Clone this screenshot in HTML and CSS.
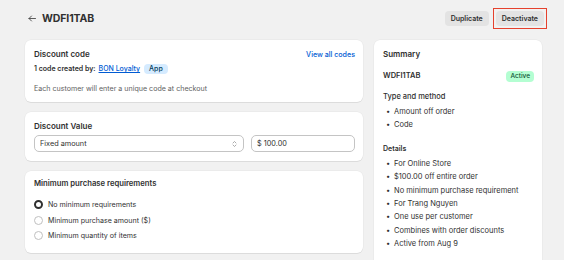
FILE: index.html
```html
<!DOCTYPE html>
<html lang="en">

<head>
  <meta charset="UTF-8">
  <meta name="viewport" content="width=device-width, initial-scale=1.0">
  <title>WDFI1TAB</title>
  <link rel="stylesheet" href="styles.css">
</head>

<body>
  <div class="page">
    <header class="header">
      <div class="title-wrap">
        <svg class="back" width="8" height="7" viewBox="0 0 8 7">
          <path d="M7.5 3.5H1M3.5 1L1 3.5L3.5 6" fill="none" stroke="#4a4a4a" stroke-width="0.9" stroke-linecap="round" stroke-linejoin="round"/>
        </svg>
        <h1 class="title">WDFI1TAB</h1>
      </div>
      <div class="actions">
        <button class="btn">Duplicate</button>
        <span class="highlight"><button class="btn">Deactivate</button></span>
      </div>
    </header>

    <div class="columns">
      <div class="main">
        <section class="card card-code">
          <div class="card-head">
            <h2>Discount code</h2>
            <a href="#" class="link-plain">View all codes</a>
          </div>
          <p class="created">1 code created by: <a href="#" class="link">BON Loyalty</a> <span class="badge badge-app">App</span></p>
          <p class="muted">Each customer will enter a unique code at checkout</p>
        </section>

        <section class="card card-value">
          <h2>Discount Value</h2>
          <div class="fields">
            <div class="field select">
              <span>Fixed amount</span>
              <svg width="5" height="8" viewBox="0 0 5 8">
                <path d="M1 3L2.5 1.5L4 3M1 5L2.5 6.5L4 5" fill="none" stroke="#8a8a8a" stroke-width="0.7" stroke-linecap="round" stroke-linejoin="round"/>
              </svg>
            </div>
            <div class="field amount">
              <span>$ 100.00</span>
            </div>
          </div>
        </section>

        <section class="card card-min">
          <h2>Minimum purchase requirements</h2>
          <ul class="radios">
            <li><span class="radio checked"></span>No minimum requirements</li>
            <li><span class="radio"></span>Minimum purchase amount ($)</li>
            <li><span class="radio"></span>Minimum quantity of items</li>
          </ul>
        </section>
      </div>

      <aside class="card summary">
        <h2>Summary</h2>
        <div class="summary-code">
          <span>WDFI1TAB</span>
          <span class="badge badge-active">Active</span>
        </div>
        <h3>Type and method</h3>
        <ul class="bullets">
          <li>Amount off order</li>
          <li>Code</li>
        </ul>
        <h3 class="details">Details</h3>
        <ul class="bullets">
          <li>For Online Store</li>
          <li>$100.00 off entire order</li>
          <li>No minimum purchase requirement</li>
          <li>For Trang Nguyen</li>
          <li>One use per customer</li>
          <li>Combines with order discounts</li>
          <li>Active from Aug 9</li>
        </ul>
      </aside>
    </div>
  </div>
</body>

</html>
```

FILE: styles.css
```css
* {
  padding: 0;
  margin: 0;
  box-sizing: border-box;
  font-family: "Inter", "Liberation Sans", sans-serif;
}

body {
  background-color: #f1f1f1;
  color: #303030;
  font-size: 7.5px;
  overflow: hidden;
}

.page {
  padding: 0 22px 0 25px;
}

.header {
  display: flex;
  justify-content: space-between;
  align-items: center;
  height: 36px;
  margin-right: -5px;
  margin-bottom: 4px;
}

.title-wrap {
  display: flex;
  align-items: center;
}

.back {
  margin-left: 3px;
  margin-right: 6px;
}

.title {
  font-size: 10.5px;
  font-weight: 700;
  color: #303030;
  letter-spacing: -0.1px;
}

.actions {
  display: flex;
  align-items: center;
  gap: 4px;
  padding-top: 1px;
}

.btn {
  background-color: #e3e3e3;
  border: none;
  border-radius: 4px;
  font-size: 7px;
  font-weight: 600;
  color: #303030;
  height: 15px;
  padding: 0 6px;
}

.highlight {
  display: flex;
  padding: 2px 2px;
  border: 1.5px solid #e5412d;
}

.columns {
  display: flex;
  gap: 11px;
  align-items: flex-start;
}

.main {
  width: 338px;
  display: flex;
  flex-direction: column;
  gap: 10px;
}

.card {
  background: #ffffff;
  border-radius: 6px;
  box-shadow: 0 1px 0 rgba(26, 26, 26, 0.07), 0 0 0 0.5px rgba(0, 0, 0, 0.05);
  padding: 8px 8px 8px 9px;
}

h2 {
  font-size: 8px;
  font-weight: 600;
  line-height: 12px;
  color: #303030;
}

.card-min h2 {
  font-size: 7.7px;
}

.card-head {
  display: flex;
  justify-content: space-between;
  align-items: center;
}

.link-plain {
  color: #005bd3;
  text-decoration: none;
  font-weight: 500;
  font-size: 7.1px;
}

.created {
  margin-top: 3px;
  line-height: 12px;
  font-weight: 600;
  font-size: 7px;
  display: flex;
  align-items: center;
  gap: 3px;
}

.link {
  color: #005bd3;
  font-weight: 500;
}

.badge {
  display: inline-flex;
  align-items: center;
  height: 10px;
  padding: 0 4px;
  border-radius: 4px;
  font-size: 6.5px;
  font-weight: 500;
}

.badge-app {
  background-color: #d5ebff;
  color: #003a5a;
  margin-left: 1px;
  font-size: 7px;
  padding: 0 5px;
}

.badge-active {
  background-color: #b4fed2;
  color: #0c5132;
  height: 11px;
}

.muted {
  margin-top: 8px;
  line-height: 12px;
  color: #616161;
  font-size: 7.1px;
}

.card-code {
  padding-bottom: 7px;
}

.card-value {
  padding-bottom: 9px;
}

.fields {
  display: flex;
  gap: 7px;
  margin-top: 3px;
}

.field {
  height: 17px;
  border: 0.8px solid #c4c4c4;
  border-radius: 5px;
  display: flex;
  align-items: center;
  justify-content: space-between;
  padding: 0 6px 0 5px;
  color: #303030;
  font-size: 7.3px;
}

.select {
  width: 210px;
}

.amount {
  flex: 1;
}

.card-min {
  padding-top: 7px;
  padding-bottom: 9px;
}

.radios {
  list-style: none;
  margin-top: 7px;
  font-size: 7.1px;
}

.radios li {
  display: flex;
  align-items: center;
  gap: 5px;
  height: 15.5px;
}

.radio {
  width: 9px;
  height: 9px;
  border-radius: 50%;
  border: 0.8px solid #c0c0c0;
}

.radio.checked {
  border: 2.8px solid #303030;
}

.summary {
  width: 168px;
  padding-bottom: 20px;
}

.summary-code {
  display: flex;
  justify-content: space-between;
  align-items: center;
  margin-top: 10px;
  font-weight: 600;
  font-size: 7.5px;
  line-height: 12px;
}

h3 {
  font-size: 7.5px;
  font-weight: 500;
  line-height: 12px;
  margin-top: 9px;
}

h3.details {
  margin-top: 11px;
  font-weight: 600;
  font-size: 7px;
}

.bullets {
  list-style: none;
  margin-top: 2px;
}

.bullets li {
  line-height: 13.4px;
  padding-left: 11px;
  position: relative;
}

.bullets li::before {
  content: "\2022";
  position: absolute;
  left: 3px;
}
```
